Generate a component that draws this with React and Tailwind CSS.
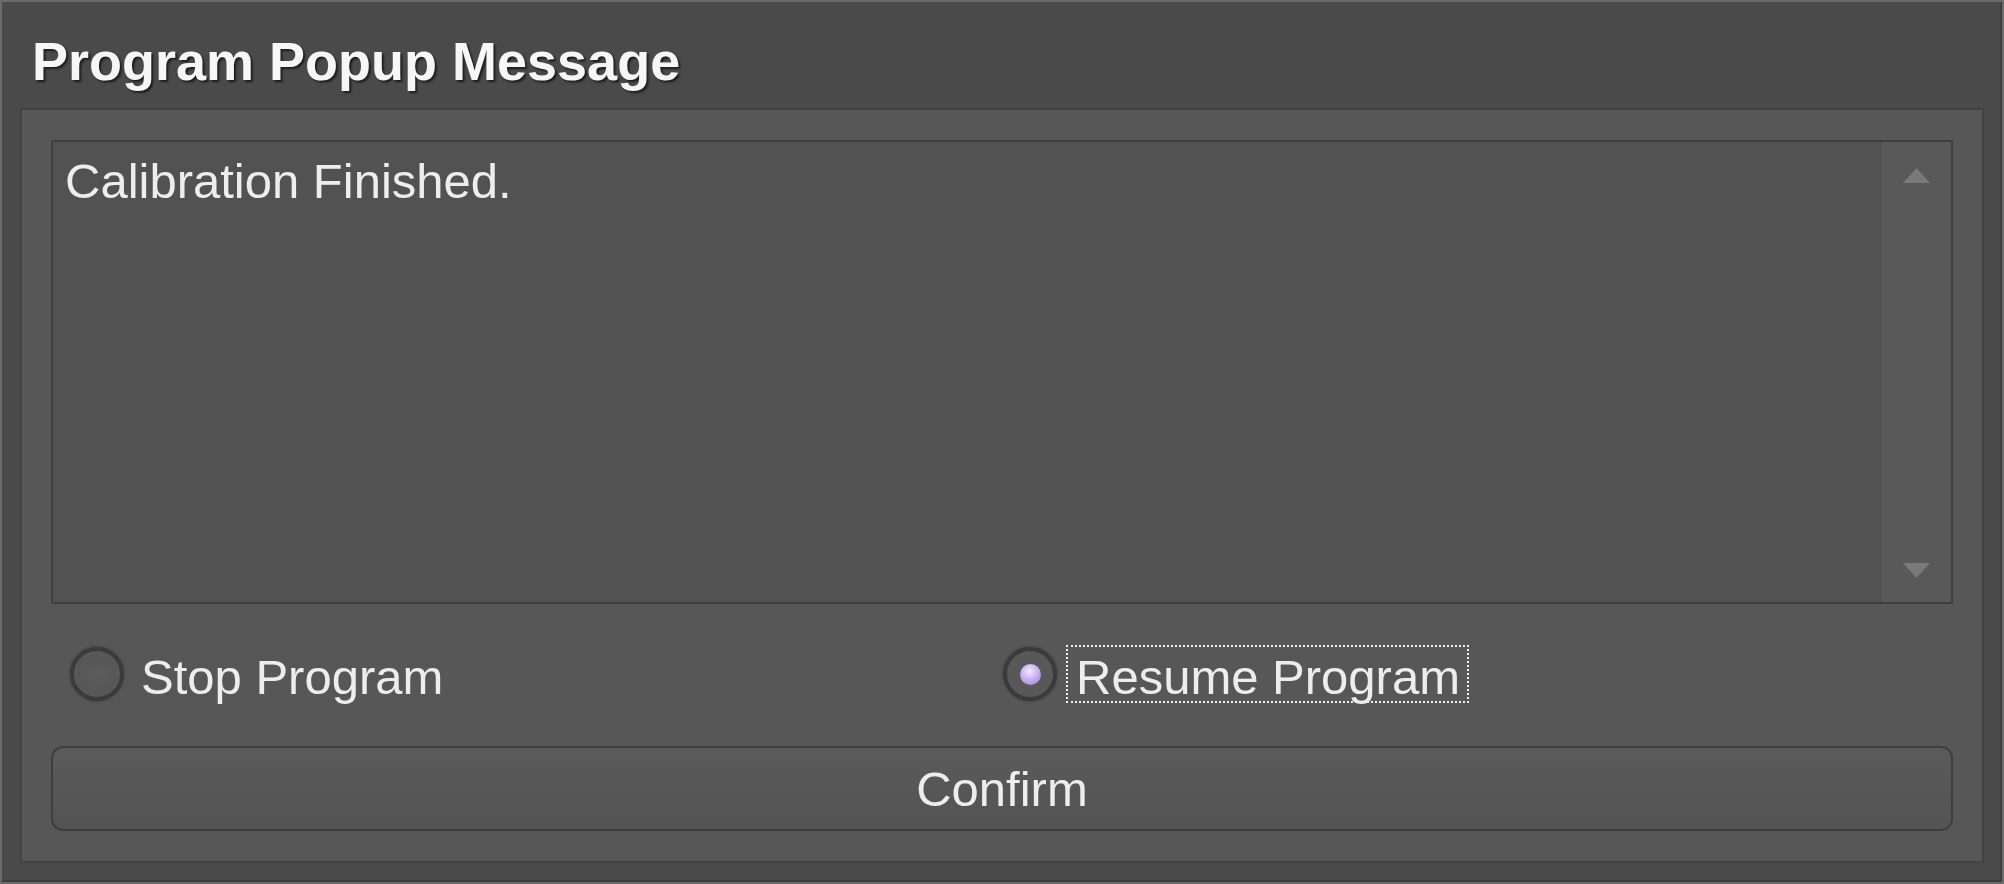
import { useState } from "react";

const font = { fontFamily: '"Liberation Sans", Arial, sans-serif' };

const Radio = ({ checked }) => (
    <span className="flex items-center justify-center w-[54px] h-[54px] rounded-full border-[4px] border-[#3b3b3b] bg-[#585858] shadow-[0_0_3px_rgba(0,0,0,0.35)] shrink-0">
        {checked ? (
            <span className="w-[21px] h-[21px] rounded-full bg-[radial-gradient(circle_at_45%_35%,#f4ecff_0%,#c9b2f2_45%,#9a7ad8_100%)]" />
        ) : (
            <span className="w-[40px] h-[40px] rounded-full bg-[radial-gradient(circle,#5c5c5c_0%,#545454_100%)]" />
        )}
    </span>
);

const App = () => {
    const [choice, setChoice] = useState("resume");

    return (
        <div className="w-[2004px] h-[884px] bg-[#6a6a6a] p-[2px] text-[#ededed]" style={font}>
            <div className="h-full flex flex-col bg-[#4a4a4a] border-r-2 border-b-2 border-[#3e3e3e]">
                <div className="h-[106px] pl-[30px] pt-[28px] text-[54px] leading-[62px] font-bold text-[#f6f6f6] [text-shadow:2px_2px_2px_#1e1e1e]">
                    Program Popup Message
                </div>

                <div className="ml-[18px] mr-[16px] flex flex-col bg-[#575757] border-2 border-[#424242] pt-[30px] px-[29px] pb-[30px]">
                    {/* message box */}
                    <div className="h-[464px] flex bg-[#525252] border-2 border-[#3f3f3f]">
                        <div className="flex-1 pl-[12px] pt-[11px] text-[49px] leading-[56px]">
                            Calibration Finished.
                        </div>
                        <div className="w-[71px] flex flex-col items-center justify-between pt-[26px] pb-[24px] bg-[#595959] border-l border-[#4e4e4e]">
                            <svg width="27" height="15" viewBox="0 0 27 15">
                                <polygon points="13.5,0 27,15 0,15" fill="#7a7a7a" />
                            </svg>
                            <svg width="27" height="15" viewBox="0 0 27 15">
                                <polygon points="0,0 27,0 13.5,15" fill="#7a7a7a" />
                            </svg>
                        </div>
                    </div>

                    {/* options */}
                    <div className="h-[142px] flex items-center pl-[19px] pb-[2px] text-[49px]">
                        <label className="w-[933px] flex items-center gap-[17px] cursor-default" onClick={() => setChoice("stop")}>
                            <Radio checked={choice === "stop"} />
                            <span className={choice === "stop" ? "border-2 border-dotted border-[#f0f0f0] px-[8px] pt-[6px] leading-[48px]" : "border-y-2 border-transparent pt-[6px] leading-[48px]"}>
                                Stop Program
                            </span>
                        </label>
                        <label className="flex items-center gap-[9px] cursor-default" onClick={() => setChoice("resume")}>
                            <Radio checked={choice === "resume"} />
                            <span className={choice === "resume" ? "border-2 border-dotted border-[#f0f0f0] pl-[8px] pr-[7px] pt-[6px] leading-[48px]" : "border-y-2 border-transparent pt-[6px] leading-[48px]"}>
                                Resume Program
                            </span>
                        </label>
                    </div>

                    <button className="h-[85px] w-full flex items-center justify-center rounded-[12px] border-2 border-[#3f3f3f] bg-gradient-to-b from-[#5b5b5b] to-[#535353] text-[49px] leading-[56px] text-[#ededed]">
                        Confirm
                    </button>
                </div>
            </div>
        </div>
    );
};

export default App;
